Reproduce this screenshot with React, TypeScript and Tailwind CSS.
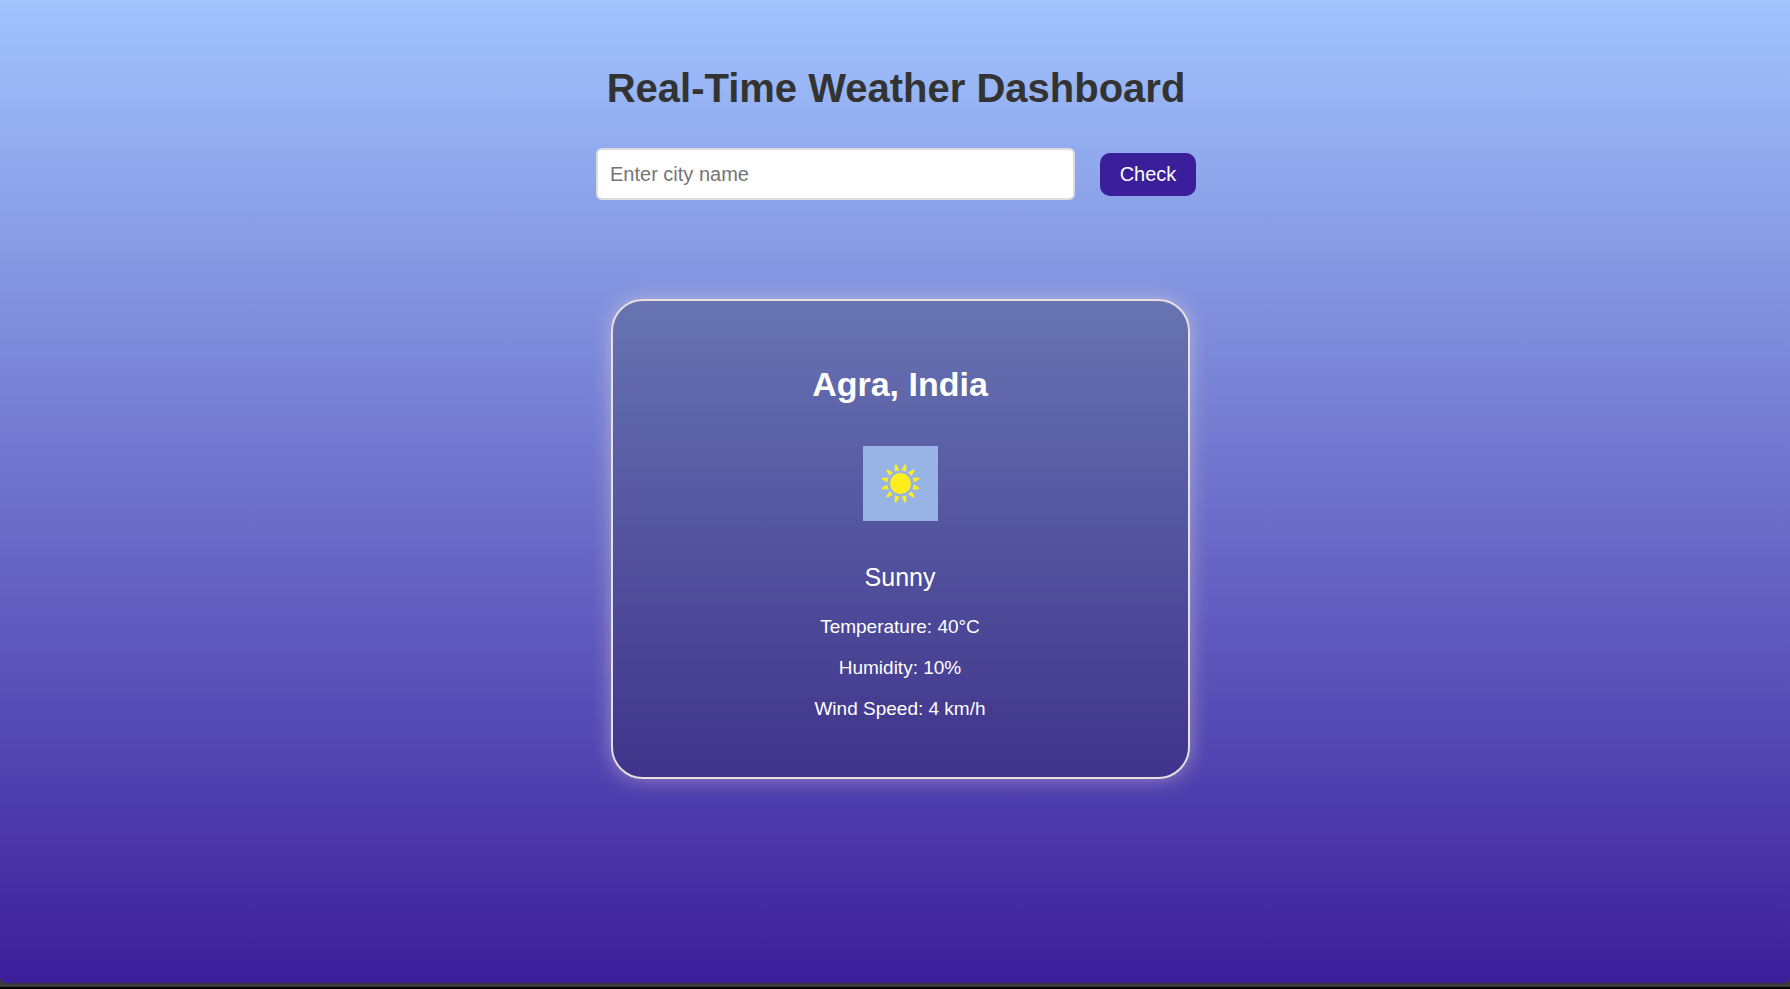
const rays = Array.from({ length: 12 }, (_, i) => 15 + i * 30);

const readings = [
  { label: "Temperature", value: "40°C" },
  { label: "Humidity", value: "10%" },
  { label: "Wind Speed", value: "4 km/h" },
];

function SunIcon() {
  return (
    <svg viewBox="0 0 75 75" className="size-[75px]" role="img" aria-label="Sunny">
      <rect width="75" height="75" fill="#97b4e5" />
      <circle cx="37.5" cy="37.5" r="10.5" fill="#ffee1c" />
      {rays.map((angle) => (
        <path
          key={angle}
          d="M36.6 18.2 L38.4 18.2 L39.9 24.6 Q37.5 23.8 35.1 24.6 Z"
          fill="#ffee1c"
          transform={`rotate(${angle} 37.5 37.5)`}
        />
      ))}
    </svg>
  );
}

export default function App() {
  return (
    <div className="flex min-h-screen flex-col border-b-2 border-black bg-[#3a3a3a] pb-1 font-['Liberation_Sans',Arial,sans-serif]">
      <main className="flex grow flex-col items-center rounded-b-md bg-linear-to-b/srgb from-[#a1c4fd] to-[#3b1e9a] pr-4 pl-[18px] pt-16">
        <h1 className="text-center text-[40px] leading-12 font-bold text-[#333333]">
          Real-Time Weather Dashboard
        </h1>
        <form
          className="mt-9 flex w-full max-w-[600px] items-center gap-[25px]"
          onSubmit={(e) => e.preventDefault()}
        >
          <input
            type="text"
            aria-label="City name"
            placeholder="Enter city name"
            className="h-[52px] min-w-0 grow rounded-md border-2 border-[#dddddd] bg-white px-3 text-xl text-[#333333] placeholder:text-[#757575]"
          />
          <button
            type="submit"
            className="h-[43px] w-24 rounded-[10px] bg-[#3b1e9a] text-xl text-white"
          >
            Check
          </button>
        </form>
        <section className="mt-[99px] ml-2 flex w-full max-w-[579px] flex-col items-center rounded-[32px] border-2 border-[#e8dfdf] bg-black/20 px-6 pt-[63px] pb-12 text-white shadow-[0_0_20px_rgba(232,223,223,0.45)]">
          <h2 className="text-[34px] leading-10 font-bold">Agra, India</h2>
          <div className="mt-[42px]">
            <SunIcon />
          </div>
          <p className="mt-10 text-[25px] leading-8">Sunny</p>
          <div className="mt-[13px] flex flex-col text-center text-[19px] leading-[41px]">
            {readings.map((r) => (
              <p key={r.label}>
                {r.label}: {r.value}
              </p>
            ))}
          </div>
        </section>
      </main>
    </div>
  );
}
